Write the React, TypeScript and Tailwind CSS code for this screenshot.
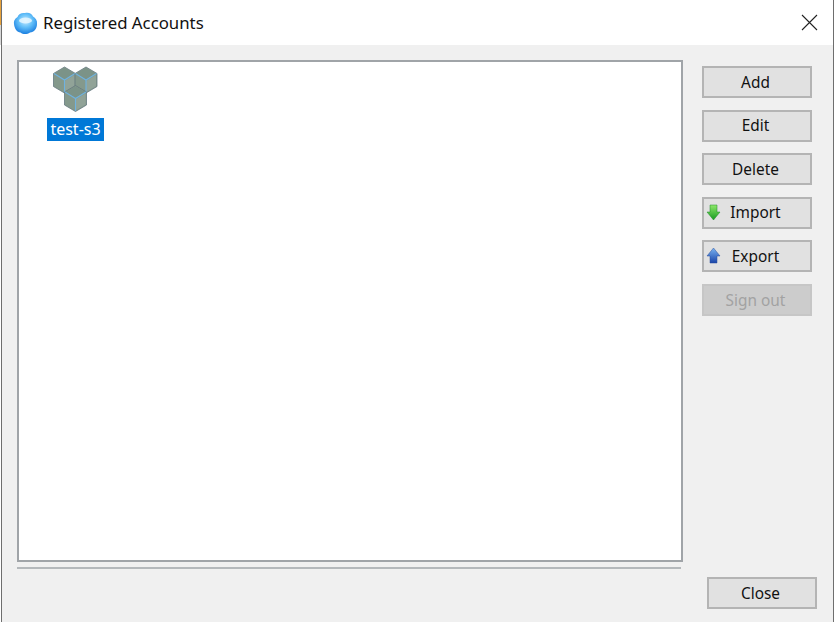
import React from "react";

function CloudIcon() {
  return (
    <svg width="25" height="24" viewBox="0 0 25 24" className="shrink-0">
      <defs>
        <radialGradient id="cl" cx="50%" cy="38%" r="62%">
          <stop offset="0%" stopColor="#c8ecff" />
          <stop offset="50%" stopColor="#62bff9" />
          <stop offset="100%" stopColor="#1c7fe0" />
        </radialGradient>
      </defs>
      <path d="M1 13 C0.5 9 3 7 4.5 6 C5.5 2.5 9 1.5 12 2 C15.5 1 19 2.5 20 5.5 C22.5 7 24.5 9.5 24 13 C24 18 21 21 17 21.5 C14 23.5 10 23.5 7.5 21.5 C4 21 1.5 18 1 13Z" fill="url(#cl)" />
      <ellipse cx="12.5" cy="9.5" rx="6.5" ry="3" fill="#e6f7ff" opacity="0.85" />
    </svg>
  );
}

function Cube({ x, y }: { x: number; y: number }) {
  return (
    <g transform={`translate(${x} ${y})`}>
      <path d="M11 0 L22 6.5 L22 19.5 L11 26 L0 19.5 L0 6.5 Z" fill="#84998c" stroke="#667880" strokeWidth="0.8" />
      <path d="M11 1 L21 6.5 L11 12.5 L1 6.5 Z" fill="#7b9388" />
      <path d="M11 14 L21 8 L21 19 L11 25 Z" fill="#91a398" />
      <path d="M0.5 6.5 L11 13 L21.5 6.5 M11 13 L11 25.5" fill="none" stroke="#6fb2e0" strokeWidth="1.1" />
    </g>
  );
}

function CubesIcon() {
  return (
    <svg width="46" height="46" viewBox="0 0 46 46">
      <Cube x={0.5} y={1} />
      <Cube x={22} y={1} />
      <Cube x={11.5} y={19.5} />
    </svg>
  );
}

function ArrowIcon({ up }: { up?: boolean }) {
  return (
    <svg width="16" height="17" viewBox="0 0 16 17" className="shrink-0">
      <defs>
        <linearGradient id="ag" x1="0" y1="0" x2="0" y2="1">
          <stop offset="0%" stopColor="#8ee86a" />
          <stop offset="100%" stopColor="#169a20" />
        </linearGradient>
        <linearGradient id="ab" x1="0" y1="0" x2="0" y2="1">
          <stop offset="0%" stopColor="#7ab4f2" />
          <stop offset="100%" stopColor="#1a44a8" />
        </linearGradient>
      </defs>
      {up ? (
        <path d="M7.5 1 L14 9 L11 9 L11 16 L4 16 L4 9 L1 9 Z" fill="url(#ab)" stroke="#2a4f9c" strokeWidth="0.5" />
      ) : (
        <path d="M4 1 L11 1 L11 8 L14 8 L7.5 16 L1 8 L4 8 Z" fill="url(#ag)" stroke="#1f8a28" strokeWidth="0.5" />
      )}
    </svg>
  );
}

function Btn({
  label,
  icon,
  disabled,
  className = "",
}: {
  label: string;
  icon?: React.ReactNode;
  disabled?: boolean;
  className?: string;
}) {
  return (
    <button
      className={`relative flex items-center justify-center h-[32px] w-[110px] border-2 pr-[3px] pt-[0.5px] text-[15.4px] ${
        disabled
          ? "bg-[#cccccc] border-[#c6c6c6] text-[#a2a2a2]"
          : "bg-[#e1e1e1] border-[#b4b4b4] text-[#111111]"
      } ${className}`}
    >
      {icon && <span className="absolute left-[2px] top-[5px] flex">{icon}</span>}
      <span>{label}</span>
    </button>
  );
}

export default function App() {
  return (
    <div className="w-[834px] h-[622px] flex overflow-hidden">
      <div className="w-px h-full shrink-0 bg-[linear-gradient(to_bottom,#e8a33c_0px,#e8a33c_25px,#d8d8d8_25px,#d8d8d8_45px,#ffffff_45px)]" />
      <div
        className="w-[833px] h-[622px] bg-[#f0f0f0] flex flex-col overflow-hidden border-l border-r border-l-[#6e6e6e] border-r-[#6e6e6e]"
        style={{ fontFamily: '"Noto Sans", "Open Sans", sans-serif' }}
      >
        <div className="h-[45px] bg-white flex items-center pl-[11px] pr-[15px] shrink-0">
          <CloudIcon />
          <span className="ml-[5px] text-[16.8px] text-[#111111]">Registered Accounts</span>
          <svg width="17" height="17" viewBox="0 0 17 17" className="ml-auto">
            <path d="M1 1 L16 16 M16 1 L1 16" stroke="#222222" strokeWidth="1.1" />
          </svg>
        </div>
        <div className="flex-1 flex flex-col pl-[15px] pr-[20px]">
          <div className="flex gap-[19px] pt-[15px]">
            <div className="w-[666px] h-[502px] bg-white border-2 border-[#a0a4a8] pl-[28px] pt-[4px] flex flex-col items-start">
              <div className="flex flex-col items-center w-[57px]">
                <CubesIcon />
                <span className="mt-[6px] bg-[#0078d7] text-white text-[16px] leading-[23px] w-full text-center">test-s3</span>
              </div>
            </div>
            <div className="flex flex-col pt-[6px] gap-[11.6px]">
              <Btn label="Add" />
              <Btn label="Edit" />
              <Btn label="Delete" />
              <Btn label="Import" icon={<ArrowIcon />} />
              <Btn label="Export" icon={<ArrowIcon up />} />
              <Btn label="Sign out" disabled />
            </div>
          </div>
          <div className="mt-[5px] w-[664px] h-[2px] bg-[#b4b8bb]" />
          <div className="flex justify-end mt-[8px]">
            <Btn label="Close" className="mr-[-4px]" />
          </div>
        </div>
      </div>
    </div>
  );
}
